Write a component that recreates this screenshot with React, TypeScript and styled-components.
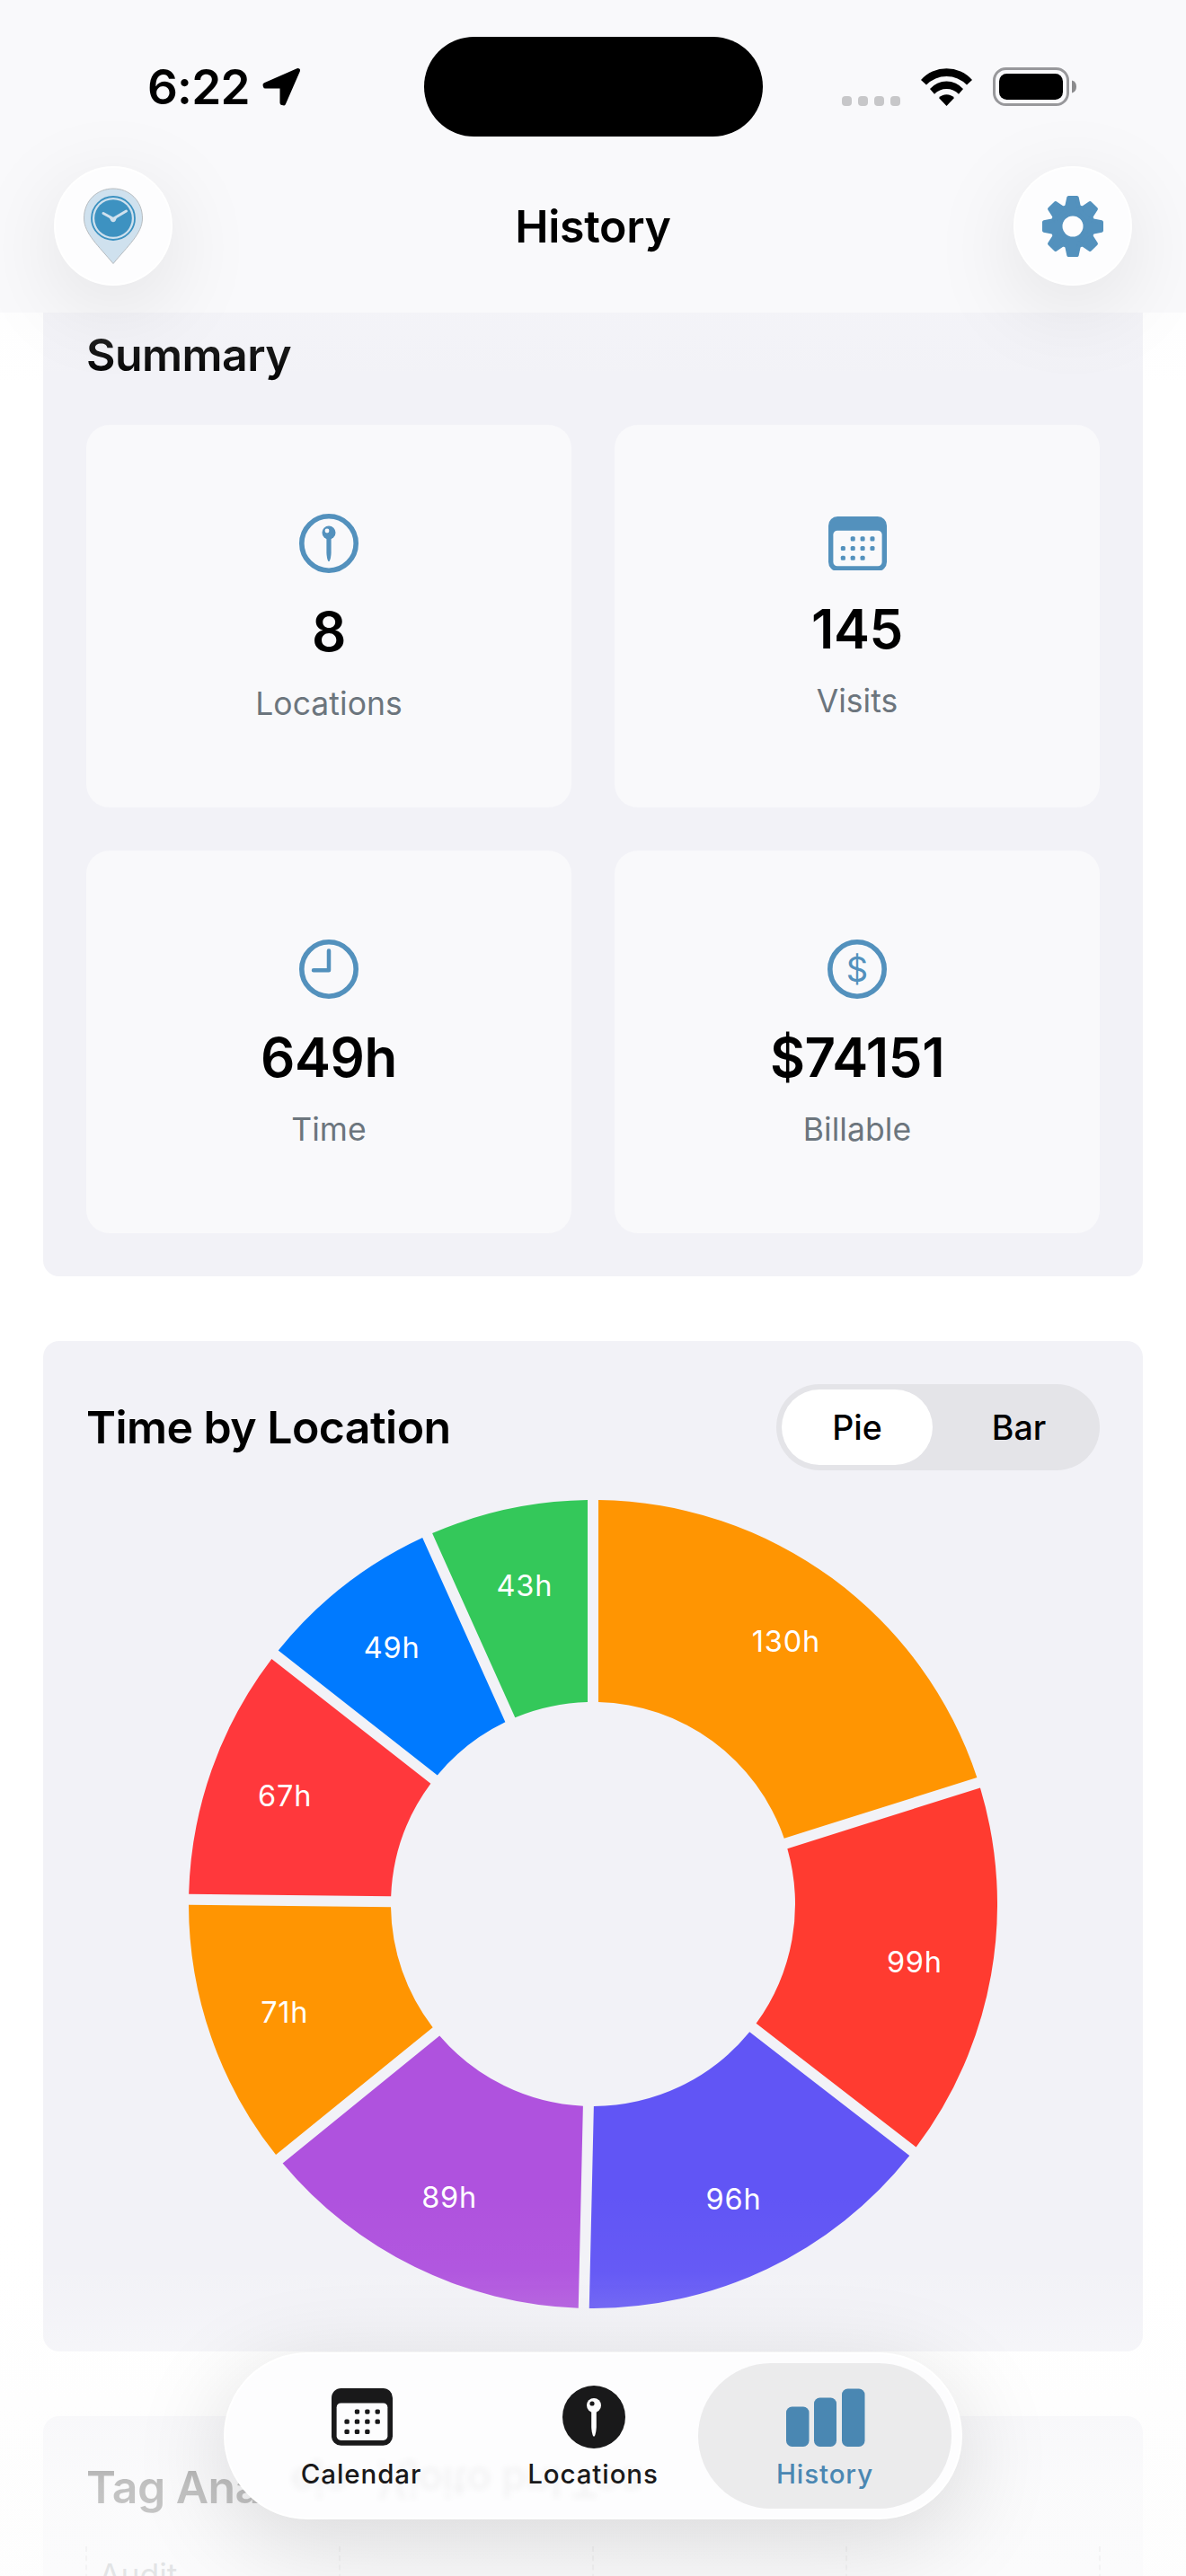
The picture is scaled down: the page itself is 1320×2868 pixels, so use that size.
import React from "react";
import styled, { createGlobalStyle } from "styled-components";

const BLUE = "#5391bd";

const GlobalStyle = createGlobalStyle`
  * { box-sizing: border-box; }
  body { margin: 0; background: #fff; font-family: Inter, "Liberation Sans", sans-serif; color: #000; }
  svg { display: block; flex: none; }
`;

const Screen = styled.div`
  position: relative;
  width: 1320px;
  height: 2868px;
  overflow: hidden;
  background: #fff;
  display: flex;
  flex-direction: column;
`;

const Header = styled.header`
  position: relative;
  z-index: 2;
  flex: none;
  height: 348px;
  background: #f9f9fb;
  &::after {
    content: "";
    position: absolute;
    left: 0;
    right: 0;
    top: 348px;
    height: 80px;
    background: linear-gradient(rgba(249, 249, 251, 0.2), rgba(249, 249, 251, 0));
  }
`;

const StatusBar = styled.div`
  height: 185px;
  padding-top: 41px;
  display: grid;
  grid-template-columns: 1fr 377px 1fr;
`;

const Island = styled.div`
  height: 111px;
  border-radius: 56px;
  background: #000;
`;

const StatusLeft = styled.div`
  height: 111px;
  display: flex;
  align-items: center;
  gap: 12px;
  padding-left: 164px;
`;

const Clock = styled.span`
  font-size: 53px;
  font-weight: 600;
  letter-spacing: -0.8px;
  line-height: 60px;
`;

const StatusRight = styled.div`
  height: 111px;
  display: flex;
  align-items: center;
  justify-content: flex-end;
  gap: 23px;
  padding-right: 121px;
`;

const Cellular = styled.div`
  display: flex;
  gap: 7px;
  padding-top: 31px;
`;

const CellDot = styled.i`
  width: 11px;
  height: 11px;
  border-radius: 4px;
  background: #c7c7c9;
`;

const NavBar = styled.div`
  display: flex;
  align-items: center;
  justify-content: space-between;
  height: 133px;
  padding: 0 60px;
`;

const RoundButton = styled.button`
  position: relative;
  z-index: 1;
  width: 132px;
  height: 133px;
  padding: 0;
  border: 2px solid #fff;
  border-radius: 50%;
  background: #fdfdfe;
  display: flex;
  align-items: center;
  justify-content: center;
  box-shadow: 0 24px 100px rgba(0, 0, 0, 0.1);
`;

const NavTitle = styled.h1`
  margin: 0;
  font-size: 50px;
  font-weight: 600;
  letter-spacing: -0.3px;
  line-height: 62px;
`;

const Content = styled.main`
  padding: 0 48px;
  display: flex;
  flex-direction: column;
  gap: 72px;
`;

const Panel = styled.section<{ $cut?: boolean }>`
  background: #f2f2f7;
  border-radius: ${(p) => (p.$cut ? "0 0 18px 18px" : "18px")};
  padding: ${(p) => (p.$cut ? "16px" : "48px")} 48px 48px;
`;

const PanelHead = styled.div<{ $height: number }>`
  height: ${(p) => p.$height}px;
  display: flex;
  align-items: center;
  justify-content: space-between;
`;

const PanelTitle = styled.h2`
  margin: 0;
  font-size: 50px;
  font-weight: 600;
  letter-spacing: -0.55px;
  line-height: 62px;
  white-space: nowrap;
`;

const CardGrid = styled.div`
  margin-top: 47px;
  display: grid;
  grid-template-columns: 1fr 1fr;
  gap: 48px;
`;

const Card = styled.div`
  height: 426px;
  border-radius: 26px;
  background: #f9f9fb;
  display: flex;
  flex-direction: column;
  align-items: center;
  justify-content: center;
  gap: 21px;
`;

const CardIcon = styled.div<{ $height: number }>`
  height: ${(p) => p.$height}px;
  display: flex;
  align-items: center;
`;

const CardValue = styled.div`
  font-size: 60px;
  font-weight: 600;
  letter-spacing: -0.4px;
  line-height: 72px;
`;

const CardLabel = styled.div`
  font-size: 35.5px;
  letter-spacing: 0.05px;
  line-height: 48px;
  color: #6c757d;
`;

const Segmented = styled.div`
  width: 360px;
  height: 96px;
  border-radius: 48px;
  padding: 6px;
  background: #e4e4e8;
  display: flex;
  gap: 12px;
`;

const Segment = styled.button<{ $active?: boolean }>`
  border: 0;
  padding: 0;
  flex: ${(p) => (p.$active ? "0 0 168px" : "1")};
  border-radius: 42px;
  background: ${(p) => (p.$active ? "#fff" : "transparent")};
  font-family: inherit;
  font-size: 37.5px;
  font-weight: 500;
  color: #000;
`;

const Donut = styled.svg`
  margin: 33px auto 0;
`;

const SliceLabel = styled.text`
  font-size: 32.5px;
  letter-spacing: 0.8px;
  fill: #fff;
  text-anchor: middle;
`;

const TagChart = styled.div`
  margin: 35px -1px 0;
  height: 200px;
  display: grid;
  grid-template-columns: repeat(4, 1fr);
  border-right: 2px dashed #c9c9cd;
`;

const TagColumn = styled.div`
  border-left: 2px dashed #c9c9cd;
  padding: 9px 0 0 13px;
  font-size: 35.5px;
  line-height: 48px;
  color: #6c757d;
`;

const BottomFade = styled.div`
  position: absolute;
  left: 0;
  right: 0;
  bottom: 0;
  height: 428px;
  background: linear-gradient(
    rgba(253, 253, 253, 0) 0,
    rgba(253, 253, 253, 0.03) 90px,
    rgba(253, 253, 253, 0.12) 130px,
    rgba(253, 253, 253, 0.3) 178px,
    rgba(253, 253, 253, 0.55) 250px,
    rgba(253, 253, 253, 0.76) 325px,
    rgba(253, 253, 253, 0.82) 428px
  );
`;

const TabBar = styled.nav`
  position: absolute;
  left: 249px;
  bottom: 63px;
  width: 822px;
  height: 186px;
  border-radius: 93px;
  background: #fdfdfe;
  border: 2px solid #fff;
  padding: 10px;
  display: flex;
  box-shadow: 0 24px 110px rgba(0, 0, 0, 0.14);
`;

const Refraction = styled.span`
  position: absolute;
  left: 72px;
  bottom: 8px;
  font-size: 46px;
  font-weight: 600;
  letter-spacing: -0.6px;
  line-height: 62px;
  white-space: pre;
  color: rgba(0, 0, 0, 0.04);
  filter: blur(3px);
  transform: scaleY(-1);
`;

const Tab = styled.button<{ $active?: boolean }>`
  position: relative;
  flex: 0 0 282px;
  height: 162px;
  border: 0;
  border-radius: 81px;
  padding: 24px 0 0;
  background: ${(p) => (p.$active ? "#ebebec" : "transparent")};
  color: ${(p) => (p.$active ? "#4a87b2" : "#19191a")};
  font-family: inherit;
  display: flex;
  flex-direction: column;
  align-items: center;
  gap: 9px;
  & + & { margin-left: -24px; }
`;

const TabIcon = styled.div`
  height: 72px;
  display: flex;
  align-items: center;
  padding-left: 2px;
`;

const TabLabel = styled.span`
  font-size: 29.5px;
  font-weight: 500;
  letter-spacing: 0.9px;
  line-height: 36px;
`;

const LocationArrow = () => (
  <svg width="46" height="46" viewBox="0 0 46 46" fill="#000" stroke="#000" strokeWidth="5" strokeLinejoin="round">
    <path d="M41.5 4.5 L5 20.5 L5.4 22 H24 V40.6 L25.6 40.9 Z" />
  </svg>
);

const Wifi = () => (
  <svg width="57" height="42" viewBox="0 0 57 42">
    <path d="M0 13 A38 38 0 0 1 57 13 L51 18.6 A31.2 31.2 0 0 0 6 18.6Z" />
    <path d="M10 23 A24.6 24.6 0 0 1 47 23 L42 28.7 A18.8 18.8 0 0 0 15 28.7Z" />
    <path d="M20 33 A11.5 11.5 0 0 1 37 33 L28.5 42Z" />
  </svg>
);

const Battery = () => (
  <svg width="94" height="43" viewBox="0 0 94 43">
    <rect x="1.5" y="1.5" width="82" height="40" rx="13" fill="none" stroke="#98989b" strokeWidth="3" />
    <rect x="7" y="7" width="71" height="29" rx="8.5" />
    <path d="M88 14.5 C91.500 15.500 93 18 93 21.500 C93 25 91.500 27.500 88 28.500Z" fill="#8b8b8d" />
  </svg>
);

const PinLogo = () => (
  <svg width="68" height="86" viewBox="0 0 68 86">
    <path
      d="M34 1 C52 1 66.500 14.500 66.500 34 C66.500 51 50 65 34 84.500 C18 65 1.500 51 1.500 34 C1.500 14.500 16 1 34 1Z"
      fill="#cfe1ee"
      stroke="#b7bcc0"
      strokeWidth="1"
    />
    <circle cx="34" cy="34" r="24" fill="none" stroke="#3d92c1" strokeWidth="1.800" />
    <circle cx="34" cy="34" r="20.800" fill="#3d92c1" />
    <path d="M23 28.500 L34 34.500 L48.500 26" fill="none" stroke="#cfe1ee" strokeWidth="3" strokeLinecap="round" />
    <path d="M29 32 L34 34 L39 31 L36.500 37 Q34 39.500 31.500 37Z" fill="#cfe1ee" />
  </svg>
);

const Gear = () => (
  <svg width="70" height="70" viewBox="-35 -35 70 70" fill={BLUE} stroke={BLUE}>
    <circle r="17.500" fill="none" strokeWidth="12" />
    {[0, 45, 90, 135, 180, 225, 270, 315].map((a) => (
      <path
        key={a}
        transform={`rotate(${a})`}
        d="M-4.700 -32 H4.700 L6.600 -23 Q7.500 -21.500 9 -20.500 L5 -18 H-5 L-9 -20.500 Q-7.500 -21.500 -6.600 -23Z"
        strokeWidth="4"
        strokeLinejoin="round"
      />
    ))}
  </svg>
);

const Ring = ({ children }: { children: React.ReactNode }) => (
  <svg width="66" height="66" viewBox="0 0 66 66" fill={BLUE}>
    <circle cx="33" cy="33" r="30.200" fill="none" stroke={BLUE} strokeWidth="5.600" />
    {children}
  </svg>
);

const PinRing = () => (
  <Ring>
    <circle cx="33" cy="21" r="7.500" />
    <path d="M30.400 27 H35.600 V43 Q35.400 50 33.600 53 H32.400 Q30.600 50 30.400 43Z" />
    <circle cx="31" cy="19" r="2.400" fill="#f9f9fb" />
  </Ring>
);

const ClockRing = () => (
  <Ring>
    <path d="M33 12.500 V34.300 H16" fill="none" stroke={BLUE} strokeWidth="4.500" strokeLinecap="round" strokeLinejoin="round" />
  </Ring>
);

const RingSign = styled.text`
  font-size: 38px;
  text-anchor: middle;
`;

const DollarRing = () => (
  <Ring>
    <RingSign x="33" y="46.500">$</RingSign>
  </Ring>
);

const CalendarIcon = ({ size, color, paper }: { size: number; color: string; paper: string }) => (
  <svg width={size} height={(size * 60) / 64} viewBox="0 0 64 60">
    <rect width="64" height="60" rx="10" fill={color} />
    <rect x="5.300" y="15.500" width="53.400" height="39" rx="4.500" fill={paper} />
    {[0, 1, 2].map((row) =>
      [0, 1, 2, 3].map((col) =>
        (row === 0 && col === 0) || (row === 2 && col === 3) ? null : (
          <rect key={`${row}${col}`} x={13.600 + col * 10.700} y={22 + row * 10.500} width="5" height="5" rx="1.500" fill={color} />
        )
      )
    )}
  </svg>
);

const PinDisc = () => (
  <svg width="70" height="70" viewBox="0 0 70 70">
    <circle cx="35" cy="35" r="35" fill="#19191a" />
    <circle cx="35" cy="22" r="8" fill="#fdfdfe" />
    <path d="M32.200 28 H37.800 V46 Q37.500 53 35.700 56.500 H34.300 Q32.500 53 32.200 46Z" fill="#fdfdfe" />
    <circle cx="33" cy="20" r="2.600" fill="#19191a" />
  </svg>
);

const BarsIcon = () => (
  <svg width="88" height="65" viewBox="0 0 88 65" fill="#4a87b2">
    <rect x="0" y="20.500" width="25.500" height="44.500" rx="6.500" />
    <rect x="31" y="10.500" width="25" height="54.500" rx="6.500" />
    <rect x="62" y="0.500" width="25.500" height="64.500" rx="6.500" />
  </svg>
);

const locations = [
  { hours: 130.7, color: "#ff9502" },
  { hours: 99.5, color: "#ff3b30" },
  { hours: 96.6, color: "#6155f5" },
  { hours: 89.4, color: "#af52de" },
  { hours: 71.7, color: "#ff9502" },
  { hours: 67.5, color: "#ff383c" },
  { hours: 49.9, color: "#007aff" },
  { hours: 43.6, color: "#34c85a" },
];

const OUTER = 450;
const INNER = 225;
const LABEL = 363.5;
const INSET = 6;

const polar = (r: number, a: number) => `${(r * Math.sin(a)).toFixed(2)} ${(-r * Math.cos(a)).toFixed(2)}`;

const slicePath = (start: number, end: number) => {
  const o = Math.asin(INSET / OUTER);
  const i = Math.asin(INSET / INNER);
  return `M${polar(OUTER, start + o)} A${OUTER} ${OUTER} 0 0 1 ${polar(OUTER, end - o)} L${polar(INNER, end - i)} A${INNER} ${INNER} 0 0 0 ${polar(INNER, start + i)}Z`;
};

const LocationDonut = () => {
  const total = locations.reduce((sum, l) => sum + l.hours, 0);
  let angle = 0;
  return (
    <Donut width="900" height="900" viewBox="-450 -450 900 900">
      {locations.map((l, index) => {
        const start = angle;
        angle += (l.hours / total) * Math.PI * 2;
        const mid = (start + angle) / 2;
        return (
          <g key={index}>
            <path d={slicePath(start, angle)} fill={l.color} />
            <SliceLabel x={LABEL * Math.sin(mid)} y={-LABEL * Math.cos(mid) + 12}>
              {`${Math.floor(l.hours)}h`}
            </SliceLabel>
          </g>
        );
      })}
    </Donut>
  );
};

const stats = [
  { value: "8", label: "Locations", height: 82, icon: <PinRing /> },
  { value: "145", label: "Visits", height: 76, icon: <CalendarIcon size={65} color={BLUE} paper="#f9f9fb" /> },
  { value: "649h", label: "Time", height: 82, icon: <ClockRing /> },
  { value: "$74151", label: "Billable", height: 82, icon: <DollarRing /> },
];

const tabs = [
  { label: "Calendar", icon: <CalendarIcon size={68} color="#19191a" paper="#fdfdfe" /> },
  { label: "Locations", icon: <PinDisc /> },
  { label: "History", icon: <BarsIcon />, active: true },
];

export default function App() {
  return (
    <Screen>
      <GlobalStyle />
      <Header>
        <StatusBar>
          <StatusLeft>
            <Clock>6:22</Clock>
            <LocationArrow />
          </StatusLeft>
          <Island />
          <StatusRight>
            <Cellular>
              <CellDot />
              <CellDot />
              <CellDot />
              <CellDot />
            </Cellular>
            <Wifi />
            <Battery />
          </StatusRight>
        </StatusBar>
        <NavBar>
          <RoundButton>
            <PinLogo />
          </RoundButton>
          <NavTitle>History</NavTitle>
          <RoundButton>
            <Gear />
          </RoundButton>
        </NavBar>
      </Header>

      <Content>
        <Panel $cut>
          <PanelHead $height={62}>
            <PanelTitle>Summary</PanelTitle>
          </PanelHead>
          <CardGrid>
            {stats.map((s) => (
              <Card key={s.label}>
                <CardIcon $height={s.height}>{s.icon}</CardIcon>
                <CardValue>{s.value}</CardValue>
                <CardLabel>{s.label}</CardLabel>
              </Card>
            ))}
          </CardGrid>
        </Panel>

        <Panel>
          <PanelHead $height={96}>
            <PanelTitle>Time by Location</PanelTitle>
            <Segmented>
              <Segment $active>Pie</Segment>
              <Segment>Bar</Segment>
            </Segmented>
          </PanelHead>
          <LocationDonut />
        </Panel>

        <Panel>
          <PanelHead $height={62}>
            <PanelTitle>Tag Analysis</PanelTitle>
          </PanelHead>
          <TagChart>
            <TagColumn>Audit</TagColumn>
            <TagColumn />
            <TagColumn />
            <TagColumn />
          </TagChart>
        </Panel>
      </Content>

      <BottomFade />
      <TabBar>
        <Refraction aria-hidden>{"eja   )(joito bnl Toa"}</Refraction>
        {tabs.map((t) => (
          <Tab key={t.label} $active={t.active}>
            <TabIcon>{t.icon}</TabIcon>
            <TabLabel>{t.label}</TabLabel>
          </Tab>
        ))}
      </TabBar>
    </Screen>
  );
}
